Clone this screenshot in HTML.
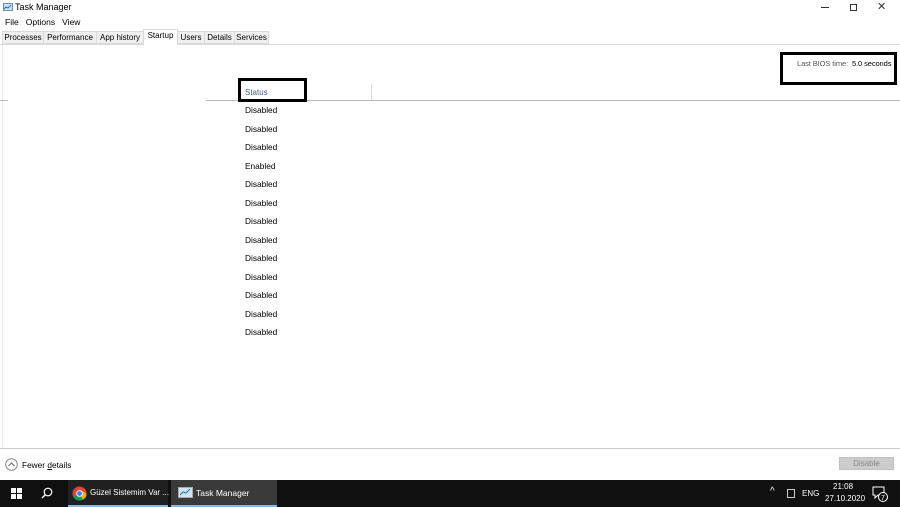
<!DOCTYPE html>
<html><head><meta charset="utf-8"><style>
*{margin:0;padding:0;box-sizing:border-box}
body{width:900px;height:507px;overflow:hidden;background:#fff;font-family:"Liberation Sans",sans-serif;font-size:8.5px;color:#000;position:relative}
.a{position:absolute;white-space:nowrap}
.tab{position:absolute;top:31px;height:13px;border:1px solid #d9d9d9;background:#f0f0f0;padding-top:1px;font-size:8px;white-space:nowrap;text-align:center;overflow:hidden}
.row{position:absolute;left:245px;font-size:8.3px}
.tb{position:absolute;top:480px;left:0;width:900px;height:27px;background:#101010;color:#fff}
</style></head><body>
<svg class="a" style="left:3px;top:3px" width="10" height="9"><rect x="0.5" y="0.5" width="9" height="7" fill="#cfe3f3" stroke="#6a8fb0"/><polyline points="1,6 3,4 5,5 8,2" fill="none" stroke="#2a6fb0"/></svg>
<div class="a" style="left:15px;top:2px;font-size:9px">Task Manager</div>
<div class="a" style="left:821px;top:7px;width:8px;height:1px;background:#333"></div>
<div class="a" style="left:850px;top:4px;width:7px;height:7px;border:1px solid #333"></div>
<div class="a" style="left:877px;top:0px;font-size:11px;color:#333">✕</div>
<div class="a" style="left:5px;top:17px;font-size:8.5px">File&nbsp;&nbsp;&nbsp;Options&nbsp;&nbsp;&nbsp;View</div>
<div class="a" style="left:0;top:44px;width:900px;height:1px;background:#d9d9d9"></div>
<div class="tab" style="left:2px;width:42px">Processes</div>
<div class="tab" style="left:43px;width:54px">Performance</div>
<div class="tab" style="left:96px;width:48px">App history</div>
<div class="tab" style="left:143px;width:35px;top:29px;height:16px;background:#fff;border-bottom:none">Startup</div>
<div class="tab" style="left:177px;width:28px">Users</div>
<div class="tab" style="left:204px;width:31px">Details</div>
<div class="tab" style="left:234px;width:35px">Services</div>
<div class="a" style="left:2px;top:45px;width:1px;height:403px;background:#eee"></div>
<div class="a" style="left:0;top:448px;width:900px;height:1px;background:#ccc"></div>
<div class="a" style="left:780px;top:52px;width:117px;height:33px;border:3px solid #000"></div>
<div class="a" style="left:797px;top:59px;font-size:7.5px;letter-spacing:-0.1px;color:#555">Last BIOS time:&nbsp;&nbsp;<span style="color:#000">5.0 seconds</span></div>
<div class="a" style="left:0;top:100px;width:8px;height:1px;background:#bbb"></div>
<div class="a" style="left:206px;top:100px;width:694px;height:1px;background:#bbb"></div>
<div class="a" style="left:371px;top:84px;width:1px;height:16px;background:#ddd"></div>
<div class="a" style="left:238px;top:78px;width:69px;height:24px;border:3px solid #000;background:#fff"></div>
<div class="a" style="left:245px;top:88px;font-size:8px;color:#4c607a">Status</div>
<div class="row" style="top:105px">Disabled</div>
<div class="row" style="top:124px">Disabled</div>
<div class="row" style="top:142px">Disabled</div>
<div class="row" style="top:161px">Enabled</div>
<div class="row" style="top:179px">Disabled</div>
<div class="row" style="top:198px">Disabled</div>
<div class="row" style="top:216px">Disabled</div>
<div class="row" style="top:235px">Disabled</div>
<div class="row" style="top:253px">Disabled</div>
<div class="row" style="top:272px">Disabled</div>
<div class="row" style="top:290px">Disabled</div>
<div class="row" style="top:309px">Disabled</div>
<div class="row" style="top:327px">Disabled</div>
<svg class="a" style="left:5px;top:458px" width="13" height="13"><circle cx="6.5" cy="6.5" r="5.8" fill="none" stroke="#888"/><polyline points="3.5,8 6.5,5 9.5,8" fill="none" stroke="#666"/></svg>
<div class="a" style="left:22px;top:460px;font-size:8.3px">Fewer <u>d</u>etails</div>
<div class="a" style="left:839px;top:457px;width:55px;height:13px;background:#ccc;border:1px solid #bfbfbf;color:#888;font-size:8px;text-align:center;line-height:11px">Disable</div>
<div class="tb">
<svg class="a" style="left:11px;top:8px" width="11" height="11"><rect x="0" y="0" width="5" height="5" fill="#fff"/><rect x="6" y="0" width="5" height="5" fill="#fff"/><rect x="0" y="6" width="5" height="5" fill="#fff"/><rect x="6" y="6" width="5" height="5" fill="#fff"/></svg>
<svg class="a" style="left:41px;top:7px" width="12" height="12"><circle cx="7" cy="5" r="3.8" fill="none" stroke="#fff" stroke-width="1.2"/><line x1="4.3" y1="7.7" x2="1" y2="11" stroke="#fff" stroke-width="1.4"/></svg>
<div class="a" style="left:68px;top:0;width:100px;height:27px;background:#202020;border-bottom:2px solid #8cb8e0"></div>
<svg class="a" style="left:72px;top:6px" width="15" height="15"><circle cx="7.5" cy="7.5" r="7" fill="#db4437"/><path d="M7.5 7.5 L1.4 11 A7 7 0 0 0 11 13.6Z" fill="#0f9d58"/><path d="M7.5 7.5 L11 13.6 A7 7 0 0 0 14.5 7.5 L7.5 3.5Z" fill="#f4b400"/><circle cx="7.5" cy="7.5" r="3.3" fill="#fff"/><circle cx="7.5" cy="7.5" r="2.5" fill="#4285f4"/></svg>
<div class="a" style="left:90px;top:8px;font-size:8px">Güzel Sistemim Var ...</div>
<div class="a" style="left:171px;top:0;width:106px;height:27px;background:#3a3a3a;border-bottom:2px solid #8cb8e0"></div>
<svg class="a" style="left:178px;top:7px" width="15" height="12"><rect x="0.5" y="0.5" width="14" height="10" fill="#cfe3f3" stroke="#aaa"/><polyline points="2,8 5,5 8,6 12,2" fill="none" stroke="#2a6fb0"/></svg>
<div class="a" style="left:196px;top:8px;font-size:8.5px">Task Manager</div>
<div class="a" style="left:770px;top:6px;font-size:10px">^</div>
<div class="a" style="left:787px;top:9px;width:8px;height:9px;border:1px solid #ccc"></div>
<div class="a" style="left:802px;top:9px;font-size:8px">ENG</div>
<div class="a" style="left:833px;top:2px;font-size:8px">21:08</div>
<div class="a" style="left:825px;top:14px;font-size:8px">27.10.2020</div>
<svg class="a" style="left:872px;top:6px" width="16" height="16"><path d="M1 1H12V9H6L3 12V9H1Z" fill="none" stroke="#fff"/><circle cx="11" cy="11" r="4.5" fill="#101010" stroke="#fff"/><text x="9" y="14" font-size="7" fill="#fff" font-family="Liberation Sans">7</text></svg>
</div>
</body></html>
